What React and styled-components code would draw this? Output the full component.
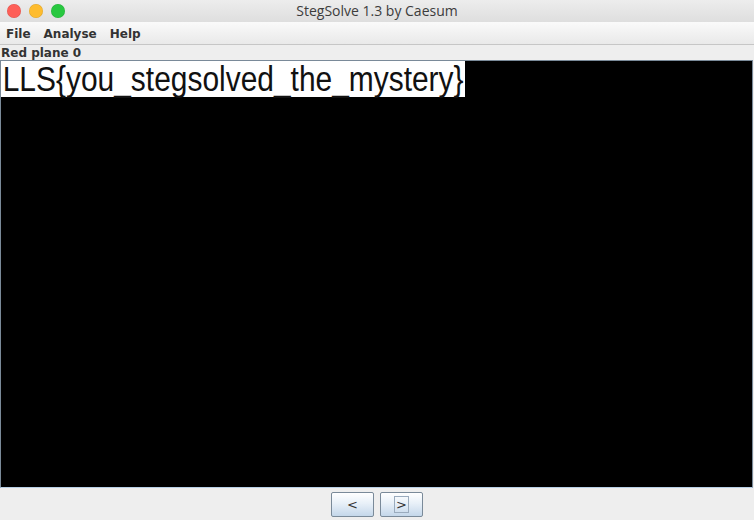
import styled, { createGlobalStyle } from "styled-components";

const GlobalStyle = createGlobalStyle`
  html, body {
    margin: 0;
    padding: 0;
    background: #eeeeee;
  }
`;

const Window = styled.div`
  width: 754px;
  height: 520px;
  display: flex;
  flex-direction: column;
  background: #eeeeee;
  font-family: "DejaVu Sans", "Liberation Sans", sans-serif;
  overflow: hidden;
`;

const TitleBar = styled.div`
  height: 22px;
  flex: none;
  display: flex;
  align-items: center;
  position: relative;
  background: linear-gradient(#ededed, #dedede);
`;

const Lights = styled.div`
  display: flex;
  gap: 8px;
  padding-left: 7px;
`;

const Light = styled.span`
  width: 14px;
  height: 14px;
  border-radius: 50%;
  background: ${(p) => p.color};
  box-shadow: inset 0 0 0 0.5px rgba(0, 0, 0, 0.12);
`;

const Title = styled.div`
  position: absolute;
  left: 0;
  right: 0;
  text-align: center;
  font-family: "Open Sans", "DejaVu Sans", sans-serif;
  font-size: 14px;
  color: #3c3c3c;
  line-height: 22px;
`;

const MenuBar = styled.div`
  height: 22px;
  flex: none;
  display: flex;
  align-items: center;
  gap: 13px;
  padding-left: 6px;
  background: linear-gradient(#fafafa, #e9e9e9);
  border-bottom: 1px solid #c6c6c6;
`;

const MenuItem = styled.span`
  font-size: 12px;
  font-weight: bold;
  color: #333333;
  padding-top: 1px;
`;

const PlaneLabel = styled.div`
  height: 15px;
  flex: none;
  padding-left: 1px;
  font-size: 12px;
  font-weight: bold;
  color: #333333;
  line-height: 16px;
`;

const ImagePanel = styled.div`
  flex: 1;
  margin: 0 1px 0 0;
  background: #000;
  border: 1px solid #7a8a99;
  border-bottom-color: #b8cfe5;
`;

const TextStrip = styled.div`
  width: 464px;
  height: 36px;
  background: #fff;
`;

const StripText = styled.div`
  width: max-content;
  font-family: "Liberation Sans", Arial, sans-serif;
  font-size: 35px;
  line-height: 36px;
  color: #111;
  white-space: nowrap;
  padding-left: 2px;
  transform: scaleX(0.855);
  transform-origin: left center;
`;

const Footer = styled.div`
  height: 32px;
  flex: none;
  display: flex;
  justify-content: center;
  align-items: center;
  gap: 6px;
`;

const NavButton = styled.button`
  width: 43px;
  height: 25px;
  padding: 0;
  display: flex;
  align-items: center;
  justify-content: center;
  border: 1px solid #7a8a99;
  border-radius: 2px;
  background: linear-gradient(#ffffff, #e8f0f8 45%, #c4d7ea);
  font-family: "DejaVu Sans", sans-serif;
  font-size: 13px;
  color: #333;
`;

const Focus = styled.span`
  border: 1px solid ${(p) => (p.focused ? "#9aabbd" : "transparent")};
  padding: 0 1px;
  line-height: 15px;
`;

export default function App() {
  return (
    <>
      <GlobalStyle />
      <Window>
        <TitleBar>
          <Lights>
            <Light color="#fe5f57" />
            <Light color="#febc2e" />
            <Light color="#28c840" />
          </Lights>
          <Title>StegSolve 1.3 by Caesum</Title>
        </TitleBar>
        <MenuBar>
          <MenuItem>File</MenuItem>
          <MenuItem>Analyse</MenuItem>
          <MenuItem>Help</MenuItem>
        </MenuBar>
        <PlaneLabel>Red plane 0</PlaneLabel>
        <ImagePanel>
          <TextStrip>
            <StripText>LLS{"{"}you_stegsolved_the_mystery{"}"}</StripText>
          </TextStrip>
        </ImagePanel>
        <Footer>
          <NavButton>
            <Focus>&lt;</Focus>
          </NavButton>
          <NavButton>
            <Focus focused>&gt;</Focus>
          </NavButton>
        </Footer>
      </Window>
    </>
  );
}
